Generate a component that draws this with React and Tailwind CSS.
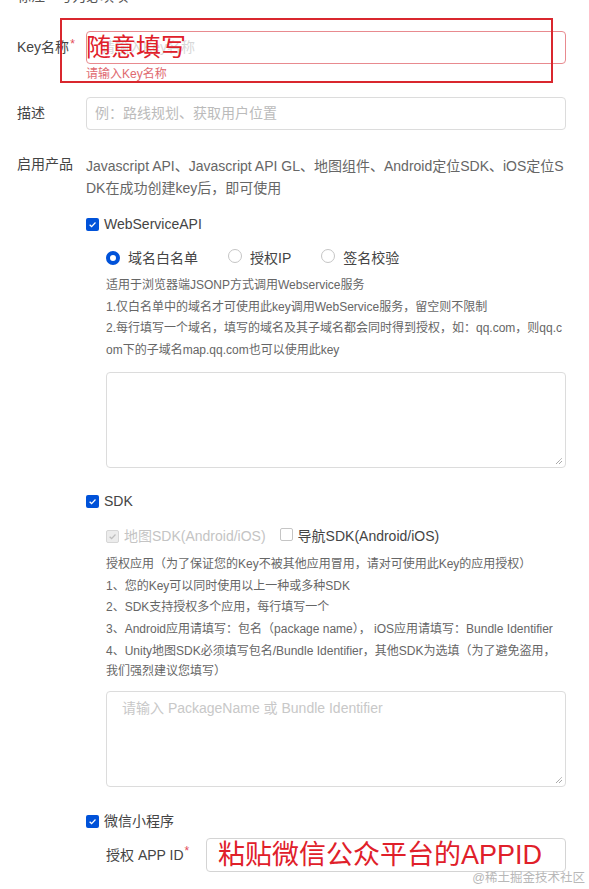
const font = { fontFamily: '"Liberation Sans", "Noto Sans CJK SC", sans-serif' };

const Check = ({ on = true, disabled = false }) => (
    <span
        className={`inline-flex items-center justify-center w-[13px] h-[13px] rounded-[2px] shrink-0 ${disabled ? 'bg-[#ececec] border border-[#d6d6d6]' : on ? 'bg-[#0052d9]' : 'bg-white border border-[#c5c5c5]'}`}
    >
        {(on || disabled) && (
            <svg width="9" height="9" viewBox="0 0 10 10">
                <path d="M1.8 5.2 L4 7.3 L8.3 2.8" fill="none" stroke={disabled ? '#bdbdbd' : '#fff'} strokeWidth="1.4" />
            </svg>
        )}
    </span>
);

const Radio = ({ on }) => (
    <span
        className={`inline-block w-[14px] h-[14px] rounded-full shrink-0 ${on ? 'border-[4px] border-[#0052d9] bg-white' : 'border border-[#c5c5c5] bg-white'}`}
    />
);

const Grip = () => (
    <svg className="absolute right-[2px] bottom-[2px]" width="8" height="8" viewBox="0 0 8 8">
        <path d="M1 7 L7 1 M4 7 L7 4" stroke="#777" strokeWidth="0.9" strokeDasharray="1 0.6" />
    </svg>
);

const App = () => {
    return (
        <div className="relative w-[589px] h-[889px] bg-white overflow-hidden text-[#333]" style={font}>
            {/* cut-off heading at the very top */}
            <div className="h-[4px] overflow-hidden pl-[17px]">
                <div className="-mt-[12px] text-[14px] leading-[16px] text-[#555]">标注 * 号为必填项</div>
            </div>

            <div className="pl-[17px] pr-[23px]">
                {/* Key名称 */}
                <div className="flex mt-[27px]">
                    <div className="w-[69px] h-[33px] flex items-center text-[14px] text-[#444]">
                        Key名称<span className="text-[#e34d59] text-[12px] -mt-[8px] ml-[1px]">*</span>
                    </div>
                    <div className="flex-1">
                        <div className="relative h-[33px] rounded-[4px] border border-[#e88a8f] flex items-center">
                            <span className="absolute left-[14px] text-[14px] text-[#d8d8d8]">请输入Key名称</span>
                            <span className="relative -ml-[1px] text-[25px] leading-none text-[#e0202a]">随意填写</span>
                        </div>
                        <div className="mt-[2px] text-[12px] leading-[16px] text-[#e06a70]">请输入Key名称</div>
                    </div>
                </div>

                {/* 描述 */}
                <div className="flex mt-[15px]">
                    <div className="w-[69px] h-[33px] flex items-center text-[14px] text-[#444]">描述</div>
                    <div className="flex-1 h-[33px] rounded-[4px] border border-[#dcdcdc] flex items-center pl-[8px] text-[14px] text-[#bbb]">
                        例：路线规划、获取用户位置
                    </div>
                </div>

                {/* 启用产品 */}
                <div className="flex mt-[25px]">
                    <div className="w-[69px] text-[14px] leading-[18px] text-[#444]">启用产品</div>
                    <div className="flex-1">
                        <div className="text-[14px] leading-[22px] text-[#666] break-all">
                            Javascript API、Javascript API GL、地图组件、Android定位SDK、iOS定位SDK在成功创建key后，即可使用
                        </div>

                        <div className="flex items-center gap-[5px] h-[22px] mt-[14px] text-[14px] text-[#444]">
                            <Check />
                            WebServiceAPI
                        </div>

                        <div className="pl-[20px]">
                            <div className="flex items-center h-[22px] mt-[12px] text-[14px] text-[#444]">
                                <Radio on />
                                <span className="ml-[8px]">域名白名单</span>
                                <span className="ml-[30px]"><Radio /></span>
                                <span className="ml-[8px]">授权IP</span>
                                <span className="ml-[30px]"><Radio /></span>
                                <span className="ml-[8px]">签名校验</span>
                            </div>
                            <div className="mt-[6px] text-[12px] leading-[21.5px] text-[#666] break-all">
                                <div>适用于浏览器端JSONP方式调用Webservice服务</div>
                                <div>1.仅白名单中的域名才可使用此key调用WebService服务，留空则不限制</div>
                                <div>2.每行填写一个域名，填写的域名及其子域名都会同时得到授权，如：qq.com，则qq.com下的子域名map.qq.com也可以使用此key</div>
                            </div>
                            <div className="relative mt-[11px] h-[96px] rounded-[4px] border border-[#dcdcdc]">
                                <Grip />
                            </div>
                        </div>

                        <div className="flex items-center gap-[5px] h-[22px] mt-[22px] text-[14px] text-[#444]">
                            <Check />
                            SDK
                        </div>

                        <div className="pl-[20px]">
                            <div className="flex items-center h-[22px] mt-[13px] text-[14px]">
                                <Check disabled />
                                <span className="ml-[5px] text-[#c4c4c4]">地图SDK(Android/iOS)</span>
                                <span className="ml-[14px]"><Check on={false} /></span>
                                <span className="ml-[5px] text-[#444]">导航SDK(Android/iOS)</span>
                            </div>
                            <div className="mt-[7px] text-[12px] leading-[21.5px] text-[#666]">
                                <div>授权应用（为了保证您的Key不被其他应用冒用，请对可使用此Key的应用授权）</div>
                                <div>1、您的Key可以同时使用以上一种或多种SDK</div>
                                <div>2、SDK支持授权多个应用，每行填写一个</div>
                                <div>3、Android应用请填写：包名（package name）， iOS应用请填写：Bundle Identifier</div>
                                <div className="leading-[20px] pt-[1px]">4、Unity地图SDK必须填写包名/Bundle Identifier，其他SDK为选填（为了避免盗用，我们强烈建议您填写）</div>
                            </div>
                            <div className="relative mt-[10px] h-[96px] rounded-[4px] border border-[#dcdcdc] px-[15px] pt-[6px] text-[14px] text-[#c8c8c8]">
                                请输入 PackageName 或 Bundle Identifier
                                <Grip />
                            </div>
                        </div>

                        <div className="flex items-center gap-[5px] h-[22px] mt-[23px] text-[14px] text-[#444]">
                            <Check />
                            微信小程序
                        </div>

                        <div className="pl-[20px] flex items-center mt-[6px]">
                            <div className="w-[100px] text-[14px] text-[#444]">
                                授权 APP ID<span className="text-[#e34d59] text-[12px] relative -top-[5px] ml-[1px]">*</span>
                            </div>
                            <div className="flex-1 h-[34px] rounded-[4px] border border-[#d4d4d4] flex items-center pl-[11px]">
                                <span className="text-[27px] leading-none text-[#e0202a]">粘贴微信公众平台的APPID</span>
                            </div>
                        </div>
                    </div>
                </div>
            </div>

            {/* annotation box over the Key名称 row */}
            <div className="absolute left-[60px] top-[18px] w-[493px] h-[65px] border-2 border-[#d9272e]" />

            {/* watermark */}
            <div className="absolute right-[4px] top-[869px] text-[12.5px] text-[#b8b8b8]">@稀土掘金技术社区</div>
        </div>
    );
};

export default App;
